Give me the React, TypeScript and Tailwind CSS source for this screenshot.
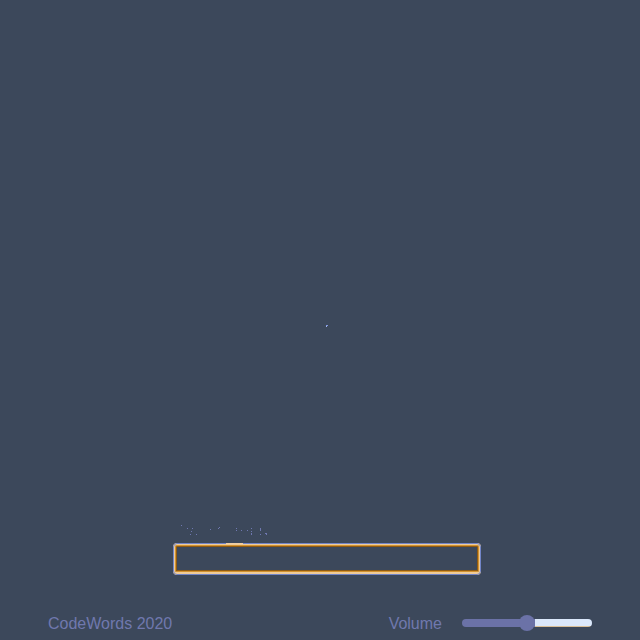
import { useState } from "react";

const specks: [number, number, number][] = [
  [4, 1, 1], [10, 4, 1], [15, 4, 1], [14, 7, 1], [13, 10, 1], [19, 10, 1],
  [33, 5, 1], [41, 4, 1], [42, 3, 1], [59, 4, 1], [59, 6, 1], [64, 6, 1],
  [70, 6, 1], [74, 4, 1], [74, 7, 1], [74, 9, 2], [83, 4, 3], [83, 10, 1],
  [88, 9, 1], [89, 9, 2],
];

function FadedPrompt() {
  return (
    <svg className="block h-[19px] w-24 fill-[#6f78b0]" viewBox="0 0 96 19" shapeRendering="crispEdges" aria-hidden="true">
      {specks.map(([x, y, height]) => (
        <rect key={`${x}-${y}`} x={x} y={y} width="1" height={height} />
      ))}
    </svg>
  );
}

export default function App() {
  const [volume, setVolume] = useState(50);
  const filled = `calc(${volume}% + 8px)`;

  return (
    <div className="flex min-h-screen flex-col bg-[#3c485b] font-['Liberation_Sans',Arial,sans-serif] text-[#7078ae]">
      <main className="flex flex-1 flex-col items-center pl-3.5">
        <div className="flex w-full flex-1 items-center justify-center pt-32">
          <svg className="h-0.5 w-0.5" viewBox="0 0 2 2" shapeRendering="crispEdges" aria-hidden="true">
            <path d="M0 0h2v1H0z" fill="#8299e2" />
            <path d="M0 1h1v1H0z" fill="#a8b9ed" />
          </svg>
        </div>
        <form className="w-full max-w-[308px]" onSubmit={(event) => event.preventDefault()}>
          <div className="ml-1">
            <FadedPrompt />
          </div>
          <div className="relative">
            <input
              type="text"
              aria-label="Your answer"
              className="block h-8 w-full rounded border-2 border-b-3 border-[#efcb98] bg-transparent px-2 text-base shadow-[inset_0_0_0_1px_#d3932f,inset_0_0_0_2px_#8f5a12] outline-1 -outline-offset-1 outline-[#7185c8] focus:outline-[#8ea2e6]"
            />
            <span className="pointer-events-none absolute top-0 left-[53px] h-px w-[17px] bg-[#edcda5]" />
          </div>
        </form>
      </main>
      <footer className="flex h-[65px] items-end justify-between px-12 pb-1.5 text-base leading-5">
        <p className="pt-0.5">CodeWords 2020</p>
        <div className="flex items-center gap-5">
          <label htmlFor="volume" className="pt-0.5">Volume</label>
          <input
            id="volume"
            type="range"
            min="0"
            max="100"
            value={volume}
            onChange={(event) => setVolume(Number(event.target.value))}
            className="h-2 w-[130px] cursor-pointer appearance-none rounded-full bg-[#dbe8fb] outline-none [&::-webkit-slider-thumb]:size-4 [&::-webkit-slider-thumb]:appearance-none [&::-webkit-slider-thumb]:rounded-full [&::-webkit-slider-thumb]:bg-[#6b72a7]"
            style={{
              backgroundImage: `linear-gradient(to right, #6b72a7 ${filled}, transparent ${filled}), linear-gradient(to top, #d9bf98 1px, transparent 1px)`,
            }}
          />
        </div>
      </footer>
    </div>
  );
}
